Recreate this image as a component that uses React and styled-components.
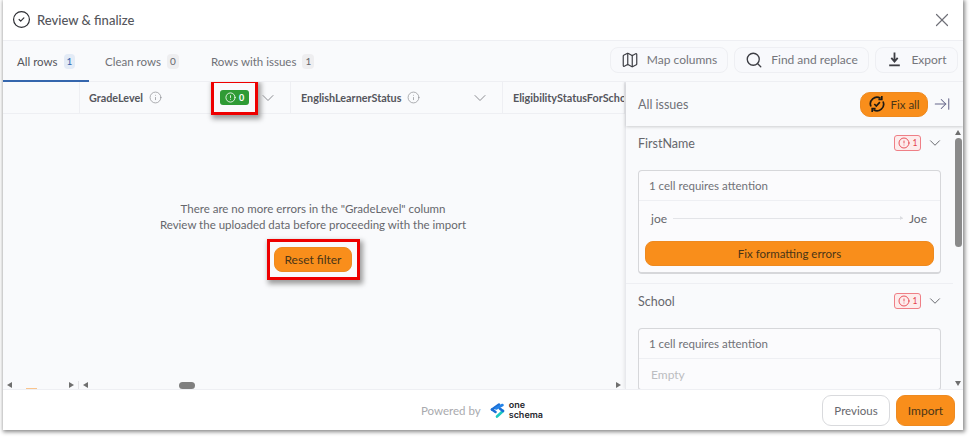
import React from 'react';
import styled, { createGlobalStyle } from 'styled-components';
import { CircleCheck, Map, Search, X, ChevronDown, Info, ArrowRightToLine, CircleAlert } from 'lucide-react';

const GlobalStyle = createGlobalStyle`
    html, body {
        margin: 0;
        padding: 0;
        background: #fff;
        font-family: Lato, "Open Sans", sans-serif;
        color: #5f6066;
    }
    * { box-sizing: border-box; }
`;

const Page = styled.div`
    width: 972px;
    height: 439px;
    padding: 0 9px 9px 3px;
    overflow: hidden;
`;

const Modal = styled.div`
    width: 960px;
    height: 430px;
    background: #fff;
    display: flex;
    flex-direction: column;
    box-shadow: 1px 1px 4px 1px #8a8a8a;
`;

const Header = styled.div`
    height: 41px;
    flex: none;
    display: flex;
    align-items: center;
    justify-content: space-between;
    padding: 0 10px 1px 9px;
    border-bottom: 1px solid #eeeff3;
`;

const Title = styled.div`
    display: flex;
    align-items: center;
    gap: 6px;
    font-size: 13px;
    font-weight: 500;
    color: #55565c;
`;

const TabBar = styled.div`
    height: 41px;
    flex: none;
    display: flex;
    align-items: stretch;
    justify-content: space-between;
    background: #f9fafc;
    border-bottom: 1px solid #eeeff3;
    padding-right: 5px;
`;

const Tabs = styled.div`
    display: flex;
`;

const Tab = styled.div`
    display: flex;
    align-items: center;
    gap: 6px;
    width: ${(p) => p.$width}px;
    padding-left: ${(p) => p.$pad}px;
    padding-top: 1px;
    font-size: 11.5px;
    color: ${(p) => (p.$active ? '#54555b' : '#707177')};
    border-bottom: ${(p) => (p.$active ? '2px solid #3566ad' : '2px solid transparent')};
    margin-bottom: -1px;
`;

const Count = styled.span`
    font-size: 10px;
    min-width: 11px;
    height: 15px;
    padding: 0 3px;
    border-radius: 4px;
    display: inline-flex;
    align-items: center;
    justify-content: center;
    background: ${(p) => (p.$active ? '#e3ebf6' : '#eeeef0')};
    color: ${(p) => (p.$active ? '#3566ad' : '#66676c')};
`;

const Tools = styled.div`
    display: flex;
    align-items: center;
    gap: 6px;
    padding-bottom: 3px;
`;

const ToolButton = styled.div`
    height: 26px;
    width: ${(p) => p.$width}px;
    display: flex;
    align-items: center;
    justify-content: center;
    gap: 8px;
    border: 1px solid #eeeff3;
    border-radius: 8px;
    background: #f8f9fc;
    font-size: 12px;
    color: #74757b;
    svg { color: #3d3e44; flex: none; }
`;

const Main = styled.div`
    flex: 1;
    min-height: 0;
    display: flex;
    overflow: hidden;
`;

const Grid = styled.div`
    width: 622px;
    flex: none;
    display: flex;
    flex-direction: column;
    background: #f9fafc;
`;

const ColumnRow = styled.div`
    height: 32px;
    flex: none;
    display: flex;
    border-bottom: 1px solid #eeeff3;
    overflow: visible;
    position: relative;
`;

const ColumnCell = styled.div`
    width: ${(p) => p.$width}px;
    flex: none;
    display: flex;
    align-items: center;
    gap: 6px;
    padding: 0 12px 0 ${(p) => p.$pad || 10}px;
    border-right: 1px solid #eeeff3;
    font-size: 10.8px;
    font-weight: 700;
    color: #55565c;
    white-space: nowrap;
    overflow: ${(p) => (p.$clip ? 'hidden' : 'visible')};
    svg { color: #8c8d92; flex: none; }
`;

const Push = styled.span`
    margin-left: auto;
    display: inline-flex;
`;

const RedBox = styled.div`
    border: 3px solid #ee0000;
    box-shadow: 2px 3px 5px 1px #9d9d9d;
    display: inline-flex;
    align-items: center;
    justify-content: center;
    background: #f9fafc;
`;

const GreenBox = styled(RedBox)`
    width: 47px;
    height: 35px;
    margin-left: auto;
    margin-right: -6px;
    flex: none;
    position: relative;
    z-index: 1;
`;

const GreenBadge = styled.div`
    width: 29px;
    height: 15px;
    border-radius: 3px;
    background: #2f9b35;
    color: #fff;
    font-size: 9px;
    font-weight: 700;
    display: flex;
    align-items: center;
    justify-content: center;
    gap: 3px;
    svg { color: #fff; }
`;

const Empty = styled.div`
    flex: 1;
    display: flex;
    flex-direction: column;
    align-items: center;
    text-align: center;
    padding-top: 87px;
    padding-right: 2px;
    font-size: 11.5px;
    line-height: 16px;
    color: #66676c;
`;

const ResetBox = styled(RedBox)`
    width: 93px;
    height: 41px;
    margin-top: 6px;
`;

const OrangeButton = styled.div`
    background: #f98e1b;
    border: 1px solid #ee8a20;
    color: #4a3517;
    display: flex;
    align-items: center;
    justify-content: center;
    font-size: ${(p) => p.$font || 11.5}px;
    border-radius: ${(p) => p.$radius || 8}px;
    height: ${(p) => p.$height}px;
    width: ${(p) => (p.$width ? `${p.$width}px` : '100%')};
    gap: 4px;
    flex: none;
`;

const HScroll = styled.div`
    height: 11px;
    flex: none;
    display: flex;
    align-items: center;
    padding-top: 3px;
`;

const Track = styled.div`
    width: ${(p) => p.$width}px;
    flex: none;
    height: 100%;
    display: flex;
    align-items: center;
    justify-content: space-between;
    padding: 0 4px;
    position: relative;
    border-right: ${(p) => (p.$split ? '1px solid #e3e3e6' : 'none')};
`;

const ArrowH = styled.span`
    width: 0;
    height: 0;
    border-top: 3.5px solid transparent;
    border-bottom: 3.5px solid transparent;
    ${(p) => (p.$right ? 'border-left: 5px solid #6f6f6f;' : 'border-right: 5px solid #6f6f6f;')}
`;

const Thumb = styled.span`
    width: 16px;
    height: 7px;
    border-radius: 4px;
    background: #7f7f7f;
    margin-left: ${(p) => p.$left}px;
    margin-right: auto;
`;

const Panel = styled.div`
    flex: 1;
    display: flex;
    flex-direction: column;
    background: #f9fafc;
    border-left: 1px solid #e8e9ed;
    box-shadow: -1px 0 3px rgba(0, 0, 0, 0.08);
    position: relative;
`;

const PanelHead = styled.div`
    height: 44px;
    flex: none;
    display: flex;
    align-items: center;
    padding: 0 12px 0 12px;
    font-size: 12.5px;
    color: #707177;
    background: #f9fafc;
    box-shadow: 0 1px 3px rgba(0, 0, 0, 0.18);
    position: relative;
    z-index: 1;
    svg { flex: none; }
`;

const CollapseIcon = styled(ArrowRightToLine)`
    margin-left: 5px;
`;

const PanelBody = styled.div`
    flex: 1;
    min-height: 0;
    display: flex;
    overflow: hidden;
`;

const IssueList = styled.div`
    flex: 1;
    min-width: 0;
`;

const Scrollbar = styled.div`
    width: 10px;
    flex: none;
    display: flex;
    flex-direction: column;
    align-items: center;
    padding-top: 4px;
    position: relative;
`;

const ArrowV = styled.span`
    width: 0;
    height: 0;
    border-left: 3.5px solid transparent;
    border-right: 3.5px solid transparent;
    ${(p) => (p.$down ? 'border-top: 5px solid #6f6f6f;' : 'border-bottom: 5px solid #6f6f6f;')}
    ${(p) => (p.$down ? 'margin-top: auto; margin-bottom: 3px;' : '')}
`;

const VThumb = styled.span`
    width: 7px;
    height: 109px;
    border-radius: 4px;
    background: #8a8a8a;
    margin-top: 3px;
`;

const Section = styled.div`
    padding: 0 12px 9px 12px;
    border-bottom: ${(p) => (p.$last ? 'none' : '1px solid #eeeff3')};
`;

const SectionHead = styled.div`
    height: 34px;
    display: flex;
    align-items: center;
    font-size: 12.5px;
    color: #66676c;
    svg { flex: none; }
`;

const SectionChevron = styled(ChevronDown)`
    margin-right: -3px;
`;

const ErrorBadge = styled.div`
    width: 27px;
    height: 16px;
    margin-left: auto;
    margin-right: 5px;
    border: 1px solid #ef7f86;
    border-radius: 3px;
    background: #fdecec;
    color: #e4434d;
    font-size: 8.5px;
    display: flex;
    align-items: center;
    justify-content: center;
    gap: 3px;
    svg { color: #e4434d; }
`;

const Card = styled.div`
    width: 303px;
    margin-top: 10px;
    border: 1px solid #d6d7da;
    border-bottom-width: 2px;
    border-radius: 4px;
    background: #fbfbfd;
`;

const CardHead = styled.div`
    height: 30px;
    display: flex;
    align-items: center;
    padding-left: 10px;
    font-size: 11.5px;
    color: #707177;
    border-bottom: 1px solid #eeeff3;
`;

const FixRow = styled.div`
    height: ${(p) => (p.$muted ? 30 : 35)}px;
    display: flex;
    align-items: center;
    gap: 6px;
    padding: 0 13px 0 12px;
    font-size: 12px;
    color: ${(p) => (p.$muted ? '#bcbdc1' : '#66676c')};
`;

const FixLine = styled.div`
    flex: 1;
    height: 1px;
    background: #e3e4e8;
    position: relative;
    &::after {
        content: '';
        position: absolute;
        right: 0;
        top: -2px;
        border-left: 3px solid #dcdde1;
        border-top: 2.5px solid transparent;
        border-bottom: 2.5px solid transparent;
    }
`;

const FixFoot = styled.div`
    padding: 5px 6px 6px;
`;

const Footer = styled.div`
    height: 41px;
    flex: none;
    display: flex;
    align-items: center;
    background: #fff;
    border-top: 1px solid #eeeff3;
    padding: 0 8px 0 0;
    position: relative;
`;

const Powered = styled.div`
    margin-left: 418px;
    display: flex;
    align-items: center;
    gap: 9px;
    font-size: 11.5px;
    color: #a9aaae;
`;

const LogoMark = styled.div`
    display: flex;
    align-items: center;
    gap: 4px;
`;

const LogoText = styled.div`
    display: flex;
    flex-direction: column;
    font-size: 9px;
    line-height: 10px;
    font-weight: 600;
    color: #26272c;
    font-family: Inter, sans-serif;
`;

const Actions = styled.div`
    margin-left: auto;
    display: flex;
    gap: 6px;
    align-items: center;
`;

const GhostButton = styled.div`
    width: 68px;
    height: 31px;
    border: 1px solid #d9dadd;
    border-radius: 9px;
    display: flex;
    align-items: center;
    justify-content: center;
    font-size: 11.5px;
    color: #66676c;
`;

const OrangeStub = styled.span`
    position: absolute;
    left: 23px;
    bottom: -1px;
    width: 11px;
    height: 2px;
    background: #f9c48d;
`;

const ExportIcon = () => (
    <svg width="17" height="17" viewBox="0 0 16 16" fill="none" stroke="currentColor" strokeWidth="1.7">
        <path d="M8 1.5v8M5 6.5 8 10l3-3.5" />
        <path d="M3 13.5h10" />
    </svg>
);

const FixIcon = () => (
    <svg width="18" height="18" viewBox="0 0 18 18" fill="none" stroke="#1d1a14" strokeWidth="1.7">
        <path d="M3 11.5A6.6 6.6 0 0 1 12.5 3.2" />
        <path d="M15 6.5A6.6 6.6 0 0 1 5.5 14.8" />
        <path d="M13.8 1v3.4h-3.4M4.2 17v-3.4h3.4" />
        <path d="m6.3 9 2 2 3.6-3.8" />
    </svg>
);

const OneSchemaLogo = () => (
    <svg width="15" height="17" viewBox="0 0 15 17" fill="none" strokeWidth="2.6" strokeLinecap="round">
        <path d="M2 7.5 9 2.5" stroke="#1c6fd6" />
        <path d="M2 7.5 5.5 10" stroke="#1c6fd6" />
        <path d="M6 6.5 12.5 3" stroke="#2483e8" />
        <path d="M13 9 7 14.5" stroke="#1cc9c1" />
        <path d="M13 9 10 6.8" stroke="#1c6fd6" />
    </svg>
);

const IssueBadge = () => (
    <ErrorBadge>
        <CircleAlert size={12} strokeWidth={1.8} />1
    </ErrorBadge>
);

const App = () => {
    return (
        <Page>
            <GlobalStyle />
            <Modal>
                <Header>
                    <Title>
                        <CircleCheck size={19} strokeWidth={1.5} color="#2d2e33" />
                        Review &amp; finalize
                    </Title>
                    <X size={22} strokeWidth={1.3} color="#6f7078" />
                </Header>
                <TabBar>
                    <Tabs>
                        <Tab $active $width={86} $pad={14}>
                            All rows <Count $active>1</Count>
                        </Tab>
                        <Tab $width={106} $pad={16}>
                            Clean rows <Count>0</Count>
                        </Tab>
                        <Tab $width={130} $pad={16}>
                            Rows with issues <Count>1</Count>
                        </Tab>
                    </Tabs>
                    <Tools>
                        <ToolButton $width={118}>
                            <Map size={18} strokeWidth={1.6} /> Map columns
                        </ToolButton>
                        <ToolButton $width={135}>
                            <Search size={18} strokeWidth={1.8} /> Find and replace
                        </ToolButton>
                        <ToolButton $width={83}>
                            <ExportIcon /> Export
                        </ToolButton>
                    </Tools>
                </TabBar>
                <Main>
                    <Grid>
                        <ColumnRow>
                            <ColumnCell $width={77} />
                            <ColumnCell $width={211} $pad={9}>
                                GradeLevel <Info size={13} strokeWidth={1.3} />
                                <GreenBox>
                                    <GreenBadge>
                                        <CircleAlert size={11} strokeWidth={1.8} />0
                                    </GreenBadge>
                                </GreenBox>
                                <ChevronDown size={20} strokeWidth={1.2} />
                            </ColumnCell>
                            <ColumnCell $width={212}>
                                EnglishLearnerStatus <Info size={13} strokeWidth={1.3} />
                                <Push>
                                    <ChevronDown size={20} strokeWidth={1.2} />
                                </Push>
                            </ColumnCell>
                            <ColumnCell $width={122} $clip>
                                EligibilityStatusForSchool
                            </ColumnCell>
                        </ColumnRow>
                        <Empty>
                            There are no more errors in the "GradeLevel" column
                            <br />
                            Review the uploaded data before proceeding with the import
                            <ResetBox>
                                <OrangeButton $width={78} $height={25} $font={12}>
                                    Reset filter
                                </OrangeButton>
                            </ResetBox>
                        </Empty>
                        <HScroll>
                            <Track $width={76} $split>
                                <ArrowH />
                                <ArrowH $right />
                                <OrangeStub />
                            </Track>
                            <Track $width={546}>
                                <ArrowH />
                                <Thumb $left={91} />
                                <ArrowH $right />
                            </Track>
                        </HScroll>
                    </Grid>
                    <Panel>
                        <PanelHead>
                            All issues
                            <Push>
                                <OrangeButton $width={68} $height={25} $radius={10}>
                                    <FixIcon /> Fix all
                                </OrangeButton>
                            </Push>
                            <CollapseIcon size={18} strokeWidth={1.4} color="#66678a" />
                        </PanelHead>
                        <PanelBody>
                            <IssueList>
                                <Section>
                                    <SectionHead>
                                        FirstName
                                        <IssueBadge />
                                        <SectionChevron size={18} strokeWidth={1.3} />
                                    </SectionHead>
                                    <Card>
                                        <CardHead>1 cell requires attention</CardHead>
                                        <FixRow>
                                            joe <FixLine /> Joe
                                        </FixRow>
                                        <FixFoot>
                                            <OrangeButton $height={25}>Fix formatting errors</OrangeButton>
                                        </FixFoot>
                                    </Card>
                                </Section>
                                <Section $last>
                                    <SectionHead>
                                        School
                                        <IssueBadge />
                                        <SectionChevron size={18} strokeWidth={1.3} />
                                    </SectionHead>
                                    <Card>
                                        <CardHead>1 cell requires attention</CardHead>
                                        <FixRow $muted>Empty</FixRow>
                                    </Card>
                                </Section>
                            </IssueList>
                            <Scrollbar>
                                <ArrowV />
                                <VThumb />
                                <ArrowV $down />
                            </Scrollbar>
                        </PanelBody>
                    </Panel>
                </Main>
                <Footer>
                    <Powered>
                        Powered by
                        <LogoMark>
                            <OneSchemaLogo />
                            <LogoText>
                                <span>one</span>
                                <span>schema</span>
                            </LogoText>
                        </LogoMark>
                    </Powered>
                    <Actions>
                        <GhostButton>Previous</GhostButton>
                        <OrangeButton $width={59} $height={31} $radius={9} $font={12}>
                            Import
                        </OrangeButton>
                    </Actions>
                </Footer>
            </Modal>
        </Page>
    );
};

export default App;
